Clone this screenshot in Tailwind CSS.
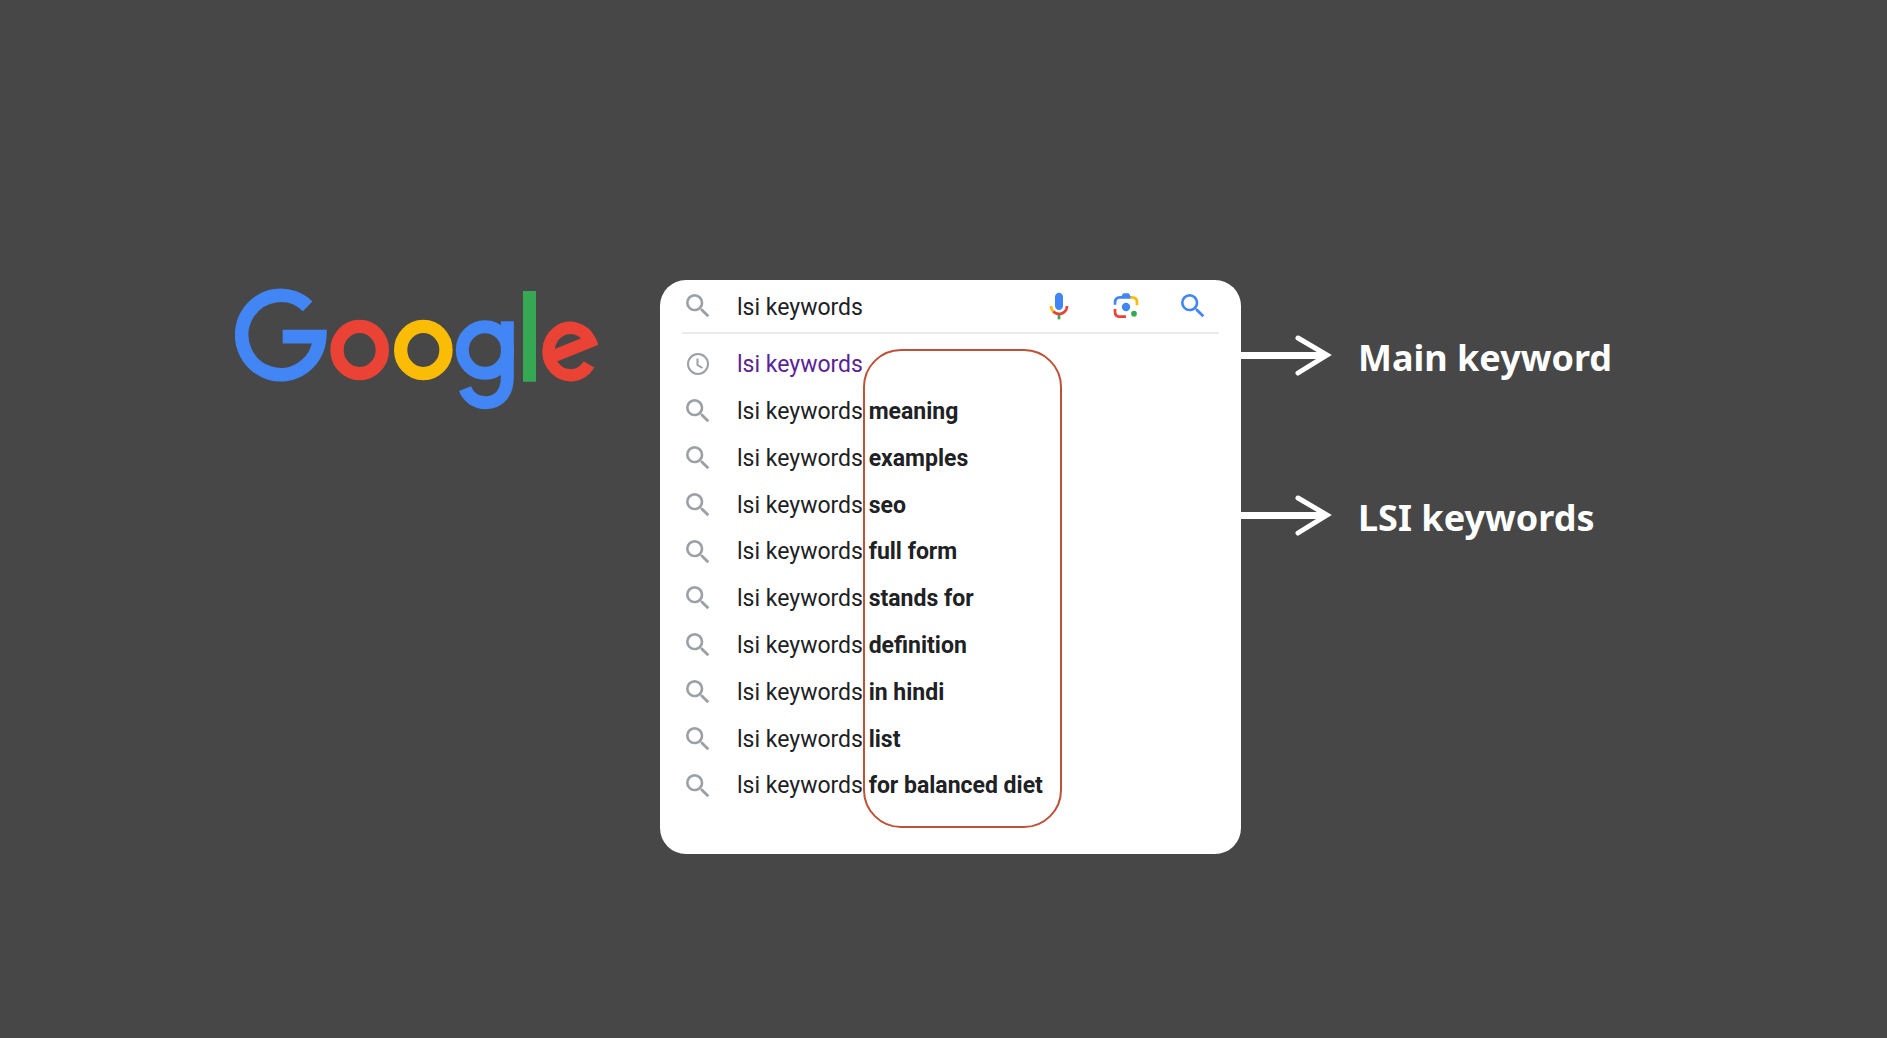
<!DOCTYPE html>
<html lang="en">
<head>
<meta charset="utf-8">
<meta name="viewport" content="width=device-width, initial-scale=1">
<title>LSI keywords in Google Search</title>
<script src="https://cdn.jsdelivr.net/npm/@tailwindcss/browser@4"></script>
</head>
<body class="min-h-screen bg-[#474747] font-['Roboto',sans-serif] text-[#202124]">
<svg class="hidden" aria-hidden="true">
  <symbol id="search" viewBox="0 0 24 24"><path fill="currentColor" d="M15.5 14h-.79l-.28-.27A6.471 6.471 0 0 0 16 9.5 6.5 6.5 0 1 0 9.5 16c1.61 0 3.09-.59 4.23-1.57l.27.28v.79l5 4.99L20.49 19l-4.99-5zm-6 0C7.01 14 5 11.99 5 9.5S7.01 5 9.5 5 14 7.01 14 9.5 11.99 14 9.5 14z"/></symbol>
  <symbol id="clock" viewBox="0 0 32 32"><g fill="none" stroke="currentColor" stroke-width="2"><circle cx="16" cy="16" r="10"/><path d="M15.500 10.500v6.500l5 3"/></g></symbol>
  <symbol id="arrow" viewBox="0 0 92 44"><path d="M0 21.500H82" stroke="white" stroke-width="7"/><path d="M57 4 86 21 57 39" fill="none" stroke="white" stroke-width="5" stroke-linecap="round" stroke-linejoin="miter"/></symbol>
</svg>
<main class="grid grid-cols-[660fr_581px_646fr] items-start pt-[280px]">
  <svg class="mt-[7px] mr-[62px] h-[124px] w-[363px] justify-self-end" viewBox="45 51 1089 372" fill="none" role="img" aria-label="Google">
    <path d="M263 109A117 119 0 1 0 299 200H188" stroke="#4285f4" stroke-width="41"/>
    <ellipse cx="419" cy="240" rx="68" ry="71" stroke="#ea4335" stroke-width="40"/>
    <ellipse cx="610" cy="240" rx="68" ry="71" stroke="#fbbc05" stroke-width="40"/>
    <g stroke="#4285f4" stroke-width="39"><ellipse cx="795" cy="240" rx="68" ry="70"/><path d="M862 154V322C862 370 836 398 797 398C768 398 745 381 735 356"/></g>
    <path d="M928.500 63V335" stroke="#34a853" stroke-width="39"/>
    <path d="M1002 258L1111 214A66 71 0 1 0 1107 283" stroke="#ea4335" stroke-width="37"/>
  </svg>

  <section class="relative rounded-[26px] bg-white pb-[45px]">
    <form class="mx-[22px] flex h-[54px] items-center border-b-2 border-[#ebebeb]" role="search">
      <svg class="size-8 text-[#9aa0a6]" aria-hidden="true"><use href="#search"/></svg>
      <input class="ml-[23px] min-w-0 flex-1 bg-transparent pt-1 text-[23px] outline-none" type="text" value="lsi keywords" aria-label="Search">
      <div class="mr-[10px] flex gap-[35px]">
        <button type="button" aria-label="Search by voice">
          <svg class="size-8" viewBox="0 0 24 24"><path fill="#4285f4" d="m12 15c1.660 0 3-1.310 3-2.970v-7.020c0-1.660-1.340-3.010-3-3.010s-3 1.340-3 3.010v7.020c0 1.660 1.340 2.970 3 2.970z"/><path fill="#34a853" d="m11 18.080h2v3.920h-2z"/><path fill="#fbbc05" d="m7.050 16.870c-1.270-1.330-2.050-2.830-2.050-4.870h2c0 1.450.56 2.420 1.470 3.380v.32l-1.150 1.180z"/><path fill="#ea4335" d="m12 16.930a4.970 5.250 0 0 1-3.540-1.550l-1.410 1.490c1.260 1.340 3.020 2.130 4.950 2.130 3.870 0 6.990-2.920 6.990-7h-1.990c0 2.920-2.240 4.930-5 4.930z"/></svg>
        </button>
        <button type="button" aria-label="Search by image">
          <svg class="size-8" viewBox="478 62 96 96" fill="none" stroke-width="8"><path stroke="#4285f4" d="M493 106V100Q493 84 508 84H540"/><path fill="#4285f4" d="M511 84L516 74Q517 72 520 72H532Q535 72 536 74L541 84Z"/><path stroke="#fbbc05" d="M540 84H544Q559 84 559 99V108"/><path stroke="#ea4335" d="M493 119V127Q493 142 508 142H526"/><circle cx="550" cy="133" r="8.500" fill="#34a853"/><circle cx="526" cy="113" r="12.500" fill="#4285f4"/></svg>
        </button>
        <button type="submit" aria-label="Google Search"><svg class="size-8 text-[#4285f4]"><use href="#search"/></svg></button>
      </div>
    </form>
    <ul class="mx-[22px] mt-[7px] flex h-[468px] flex-col text-[23px] *:flex *:flex-1 *:items-center *:gap-[23px] [&_a]:pt-[2px]">
      <li><svg class="size-8 text-[#9aa0a6]"><use href="#clock"/></svg><a href="#" class="text-[#5a2496]">lsi keywords</a></li>
      <li><svg class="size-8 text-[#9aa0a6]"><use href="#search"/></svg><a href="#">lsi keywords <b>meaning</b></a></li>
      <li><svg class="size-8 text-[#9aa0a6]"><use href="#search"/></svg><a href="#">lsi keywords <b>examples</b></a></li>
      <li><svg class="size-8 text-[#9aa0a6]"><use href="#search"/></svg><a href="#">lsi keywords <b>seo</b></a></li>
      <li><svg class="size-8 text-[#9aa0a6]"><use href="#search"/></svg><a href="#">lsi keywords <b>full form</b></a></li>
      <li><svg class="size-8 text-[#9aa0a6]"><use href="#search"/></svg><a href="#">lsi keywords <b>stands for</b></a></li>
      <li><svg class="size-8 text-[#9aa0a6]"><use href="#search"/></svg><a href="#">lsi keywords <b>definition</b></a></li>
      <li><svg class="size-8 text-[#9aa0a6]"><use href="#search"/></svg><a href="#">lsi keywords <b>in hindi</b></a></li>
      <li><svg class="size-8 text-[#9aa0a6]"><use href="#search"/></svg><a href="#">lsi keywords <b>list</b></a></li>
      <li><svg class="size-8 text-[#9aa0a6]"><use href="#search"/></svg><a href="#">lsi keywords <b>for balanced diet</b></a></li>
    </ul>
    <div class="pointer-events-none absolute top-[69px] left-[203px] h-[479px] w-[199px] rounded-[38px] border-2 border-[#bd5238]"></div>
  </section>

  <div class="mt-[50px] flex flex-col gap-[108px] font-['Noto_Sans',sans-serif] text-[36px] leading-[48px] font-bold text-white">
    <div class="flex items-center gap-[25px]"><svg class="h-11 w-[92px]" aria-hidden="true"><use href="#arrow"/></svg><p class="pt-1">Main keyword</p></div>
    <div class="flex items-center gap-[25px]"><svg class="h-11 w-[92px]" aria-hidden="true"><use href="#arrow"/></svg><p class="pt-1">LSI keywords</p></div>
  </div>
</main>
</body>
</html>
